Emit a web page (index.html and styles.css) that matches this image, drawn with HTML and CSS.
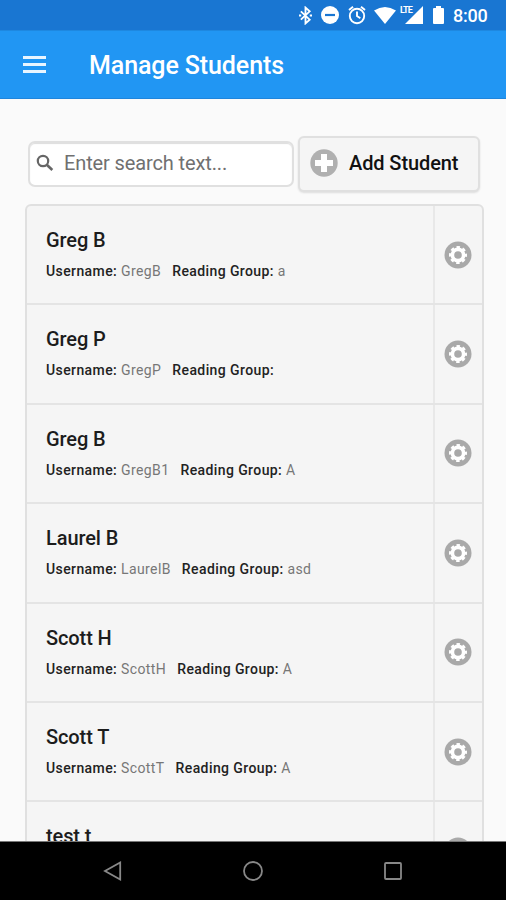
FILE: index.html
```html
<!DOCTYPE html>
<html lang="en">
<head>
<meta charset="utf-8">
<title>Manage Students</title>
<link rel="stylesheet" href="styles.css">
</head>
<body>
<svg class="symbols" aria-hidden="true">
  <symbol id="gear" viewBox="0 0 28 28">
    <circle cx="14" cy="14" r="13.5" fill="#a9a9a9"/>
    <circle cx="14" cy="14" r="5.600" fill="none" stroke="#fff" stroke-width="3.6"/>
    <circle cx="14" cy="14" r="7.700" fill="none" stroke="#fff" stroke-width="2.6" stroke-dasharray="3.400 2.648" stroke-dashoffset="1.7"/>
  </symbol>
</svg>
<div class="screen">
  <header class="status">
    <svg class="bluetooth" viewBox="0 0 14 20"><path d="M2 5.500 11.500 14.500 7 18.500V1.500L11.500 5.500 2 14.500" fill="none" stroke="#fff" stroke-width="2"/><path d="M0 9h2.400v2.200H0zM11.600 9H14v2.200h-2.400z" fill="#fff"/></svg>
    <svg class="dnd" viewBox="0 0 18 18"><circle cx="9" cy="9" r="9" fill="#fff"/><path d="M4 9h10" stroke="#1976d2" stroke-width="2.2"/></svg>
    <svg class="alarm" viewBox="0 0 18 20"><g fill="none" stroke="#fff" stroke-width="1.900"><circle cx="9" cy="11" r="7.200"/><path d="M9 6.500V11l3.300 2.200M1 5 5 1.700M17 5l-4-3.300"/></g></svg>
    <svg class="wifi" viewBox="0 0 22 17"><path d="M0 3.500Q11-3.500 22 3.500L11 17z" fill="#fff"/></svg>
    <span class="signal"><span class="lte">LTE</span><svg viewBox="0 0 18 18"><path d="M18 0v18H0z" fill="#fff"/></svg></span>
    <svg class="battery" viewBox="0 0 11 18"><path d="M3 0h5v2h2q1 0 1 1v14q0 1-1 1H1q-1 0-1-1V3q0-1 1-1h2z" fill="#fff"/></svg>
    <span class="clock">8:00</span>
  </header>
  <div class="appbar">
    <div class="menu"><i></i><i></i><i></i></div>
    <h1>Manage Students</h1>
  </div>
  <main>
    <div class="tools">
      <div class="search">
        <svg viewBox="0 0 18 18"><g fill="none" stroke="#666" stroke-width="2.200"><circle cx="7" cy="7" r="5.200"/><path d="m10.800 10.800 5.500 5.200" stroke-width="2.600"/></g></svg>
        <span>Enter search text...</span>
      </div>
      <div class="add">
        <svg viewBox="0 0 28 28"><circle cx="14" cy="14" r="13.700" fill="#b0b0b0"/><path d="M14 5v18M5 14h18" stroke="#fff" stroke-width="6"/></svg>
        <span>Add Student</span>
      </div>
    </div>
    <div class="list">
      <div class="row"><div class="info"><h2>Greg B</h2><p><b>Username:</b> <span>GregB</span><b class="group">Reading Group:</b> <span>a</span></p></div><div class="action"><svg><use href="#gear"/></svg></div></div>
      <div class="row"><div class="info"><h2>Greg P</h2><p><b>Username:</b> <span>GregP</span><b class="group">Reading Group:</b></p></div><div class="action"><svg><use href="#gear"/></svg></div></div>
      <div class="row"><div class="info"><h2>Greg B</h2><p><b>Username:</b> <span>GregB1</span><b class="group">Reading Group:</b> <span>A</span></p></div><div class="action"><svg><use href="#gear"/></svg></div></div>
      <div class="row"><div class="info"><h2>Laurel B</h2><p><b>Username:</b> <span>LaurelB</span><b class="group">Reading Group:</b> <span>asd</span></p></div><div class="action"><svg><use href="#gear"/></svg></div></div>
      <div class="row"><div class="info"><h2>Scott H</h2><p><b>Username:</b> <span>ScottH</span><b class="group">Reading Group:</b> <span>A</span></p></div><div class="action"><svg><use href="#gear"/></svg></div></div>
      <div class="row"><div class="info"><h2>Scott T</h2><p><b>Username:</b> <span>ScottT</span><b class="group">Reading Group:</b> <span>A</span></p></div><div class="action"><svg><use href="#gear"/></svg></div></div>
      <div class="row"><div class="info"><h2>test t</h2></div><div class="action"><svg><use href="#gear"/></svg></div></div>
    </div>
  </main>
  <nav>
    <svg viewBox="0 0 20 20"><path d="M17.200 1.500v17L2 10z"/></svg>
    <svg viewBox="0 0 20 20"><circle cx="10" cy="10" r="9"/></svg>
    <svg viewBox="0 0 20 20"><rect x="2" y="2" width="16" height="16" rx="1"/></svg>
  </nav>
</div>
</body>
</html>
```
FILE: styles.css
```css
* { box-sizing: border-box; }
body { margin: 0; font-family: Roboto, sans-serif; color: #1c1c1c; }
h1, h2, p { margin: 0; }
svg { display: block; flex: none; }
.symbols { display: none; }
.screen { width: 506px; height: 900px; display: flex; flex-direction: column; overflow: hidden; background: #fafafa; }

.status { height: 30px; flex: none; background: #1976d2; display: flex; align-items: center; padding-left: 299px; color: #fff; }
.bluetooth { width: 13px; height: 19px; margin-right: 9px; }
.dnd { width: 18px; height: 18px; margin-right: 9px; }
.alarm { width: 18px; height: 20px; margin-right: 8px; }
.wifi { width: 22px; height: 17px; margin-right: 4px; }
.signal { width: 23px; height: 18px; position: relative; display: flex; justify-content: flex-end; margin-right: 10px; }
.signal svg { width: 18px; height: 18px; }
.lte { position: absolute; left: 0; top: -1px; font-size: 9px; line-height: 10px; font-weight: 700; letter-spacing: -0.9px; }
.battery { width: 11px; height: 18px; margin-right: 9px; }
.clock { font-size: 18px; line-height: 20px; font-weight: 500; padding-top: 2px; letter-spacing: -0.2px; }

.appbar { height: 69px; flex: none; background: #2196f3; border-bottom: 1px solid #1f85dc; border-top: 1px solid #1e88e0; display: flex; align-items: center; padding: 3px 0 0 23px; color: #fff; }
.menu { width: 23px; display: flex; flex-direction: column; gap: 4px; margin: -4px 43px 0 0; }
.menu i { height: 3px; background: #e8f5ff; }
h1 { font-size: 25px; line-height: 32px; font-weight: 500; letter-spacing: -0.1px; }

main { flex: 1; min-height: 0; overflow: hidden; padding: 37px 22px 0 25px; border-bottom: 1px solid #777; }
.tools { display: flex; align-items: center; gap: 4px; padding-left: 3px; height: 56px; }
.search { width: 266px; height: 46px; margin-top: -1px; background: #fff; border: 2px solid #e0e0e0; border-radius: 7px; box-shadow: inset 0 1px 1px #ddd; display: flex; align-items: center; padding: 0 0 2px 6px; color: #707070; font-size: 20px; letter-spacing: -0.12px; }
.search svg { width: 18px; height: 18px; margin-right: 10px; }
.add { width: 182px; height: 56px; border: 2px solid #e0e0e0; border-radius: 6px; background: #f5f5f5; box-shadow: 0 1px 2px #ddd; display: flex; align-items: center; padding: 0 0 2px 10px; font-size: 20px; font-weight: 500; color: #111; letter-spacing: -0.1px; }
.add svg { width: 28px; height: 28px; margin-right: 11px; }

.list { margin-top: 12px; border: 2px solid #e0e0e0; border-radius: 6px; background: #f5f5f5; height: 720px; }
.row { height: 99.4px; display: flex; border-bottom: 2px solid #e4e4e4; }
.info { flex: 1; padding: 21px 0 0 19px; }
h2 { font-size: 20px; line-height: 26px; font-weight: 500; letter-spacing: -0.1px; }
p { font-size: 14px; line-height: 18px; margin-top: 9px; white-space: nowrap; color: #777; letter-spacing: 0.4px; }
p b { font-weight: 500; color: #222; }
.group { margin-left: 11px; }
.action { width: 49px; border-left: 2px solid #e8e8e8; display: flex; align-items: center; justify-content: center; padding-right: 1px; }
.action svg { width: 28px; height: 28px; }

nav { height: 58px; flex: none; background: #000; display: flex; align-items: center; justify-content: center; gap: 120px; }
nav svg { width: 20px; height: 20px; fill: none; stroke: #888; stroke-width: 1.8; }
```
